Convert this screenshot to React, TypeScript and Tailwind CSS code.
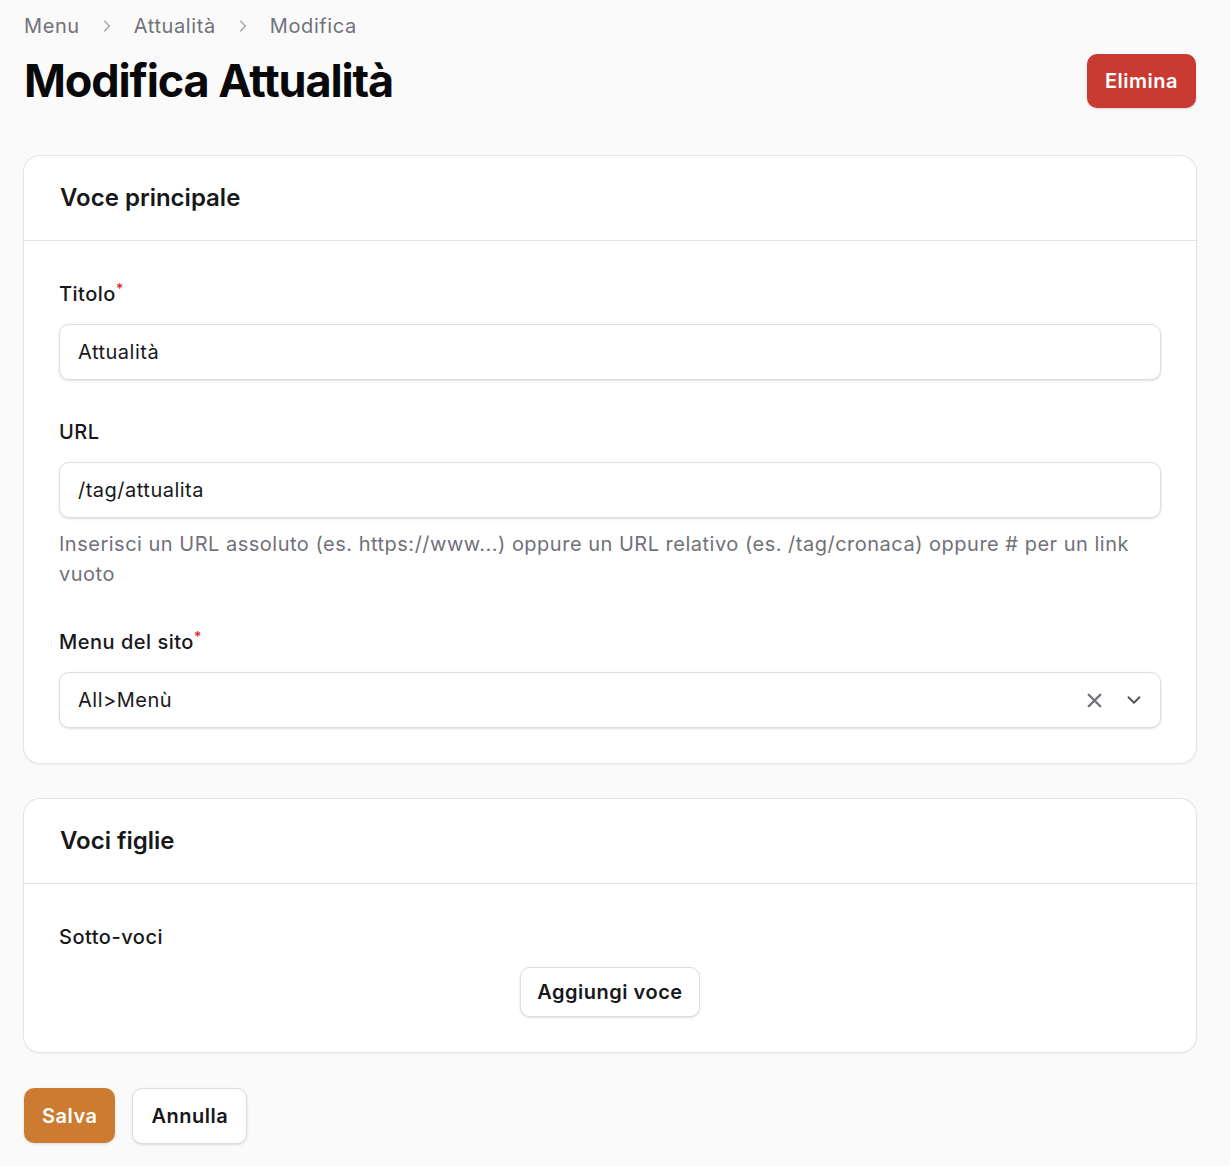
import { X, ChevronDown, ChevronRight } from "lucide-react";

const labelClass = "block text-[20px] leading-[30px] font-medium tracking-[0.5px] text-[#18181b]";
const inputClass =
  "flex h-[56px] w-full items-center rounded-[10px] border border-[#dedede] bg-white px-[18px] text-[20px] tracking-[0.5px] text-[#18181b] shadow-sm";
const buttonText = "text-[20px] font-semibold tracking-[0.5px]";

function Required() {
  return <sup className="text-[14px] font-medium text-[#dc2626]">*</sup>;
}

function Card({ title, children }: { title: string; children: React.ReactNode }) {
  return (
    <section className="rounded-[16px] bg-white shadow-sm ring-1 ring-[#e5e5e5]">
      <header className="flex h-[85px] items-center border-b border-[#e5e5e5] px-[36px]">
        <h2 className="text-[24px] font-semibold text-[#18181b]">{title}</h2>
      </header>
      <div className="px-[35px] pt-[38px] pb-[35px]">{children}</div>
    </section>
  );
}

export default function App() {
  return (
    <div className="min-h-[1166px] bg-[#fafafa] pl-6 pr-[34px] font-['Inter',sans-serif] antialiased">
      <nav className="flex h-[30px] items-center pt-[22px] text-[20px] tracking-[0.6px] text-[#71717a]">
        <span>Menu</span>
        <ChevronRight className="mx-[17px] h-[20px] w-[20px] text-[#a1a1aa]" strokeWidth={1.5} />
        <span>Attualità</span>
        <ChevronRight className="mx-[17px] h-[20px] w-[20px] text-[#a1a1aa]" strokeWidth={1.5} />
        <span>Modifica</span>
      </nav>

      <div className="mt-[24px] flex h-[54px] items-center justify-between">
        <h1 className="text-[45px] font-bold tracking-tight text-[#09090b]">Modifica Attualità</h1>
        <button className={`h-[54px] rounded-[10px] bg-[#c93a32] px-[18px] text-white shadow-sm ${buttonText}`}>
          Elimina
        </button>
      </div>

      <div className="mt-[48px]">
        <Card title="Voce principale">
          <label className={labelClass}>
            Titolo
            <Required />
          </label>
          <div className={`mt-[15px] ${inputClass}`}>Attualità</div>

          <label className={`mt-[37px] ${labelClass}`}>URL</label>
          <div className={`mt-[15px] ${inputClass}`}>/tag/attualita</div>
          <p className="mt-[11px] text-[20px] leading-[30px] tracking-[0.5px] text-[#71717a]">
            Inserisci un URL assoluto (es. https://www...) oppure un URL relativo (es. /tag/cronaca) oppure # per un link
            vuoto
          </p>

          <label className={`mt-[38px] ${labelClass}`}>
            Menu del sito
            <Required />
          </label>
          <div className={`mt-[15px] ${inputClass} justify-between pr-[15px]`}>
            <span>All&gt;Menù</span>
            <span className="flex items-center gap-[17px]">
              <X className="h-[23px] w-[23px] text-[#71717a]" strokeWidth={2.5} />
              <ChevronDown className="h-[22px] w-[22px] text-[#52525b]" strokeWidth={2} />
            </span>
          </div>
        </Card>
      </div>

      <div className="mt-[36px]">
        <Card title="Voci figlie">
          <label className={labelClass}>Sotto-voci</label>
          <div className="mt-[15px] flex justify-center">
            <button className={`h-[50px] rounded-[10px] border border-[#dedede] bg-white px-[16px] text-[#18181b] shadow-sm ${buttonText}`}>
              Aggiungi voce
            </button>
          </div>
        </Card>
      </div>

      <div className="mt-[36px] flex gap-[17px] pb-[23px]">
        <button className={`h-[55px] rounded-[10px] bg-[#cd7b30] px-[18px] text-white shadow-sm ${buttonText}`}>
          Salva
        </button>
        <button className={`h-[56px] rounded-[10px] border border-[#dedede] bg-white px-[18px] text-[#18181b] shadow-sm ${buttonText}`}>
          Annulla
        </button>
      </div>
    </div>
  );
}
